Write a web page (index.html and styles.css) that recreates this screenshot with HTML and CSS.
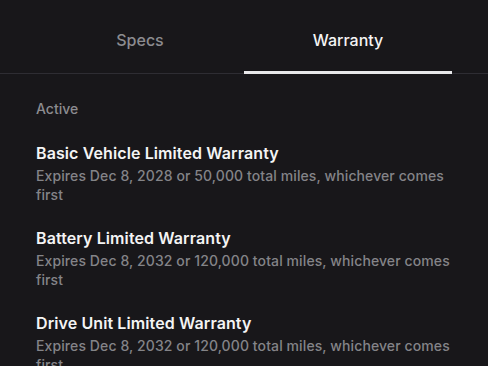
FILE: index.html
```html
<!DOCTYPE html>
<html>
<head>
  <title>Warranty</title>
  <meta name="viewport" content="width=device-width, initial-scale=1">
  <link rel="stylesheet" href="styles.css">
</head>
<body>
  <div class="tabs">
    <div class="tab">Specs</div>
    <div class="tab active">Warranty</div>
  </div>
  <div class="content">
    <div class="section-label">Active</div>
    <div class="item">
      <div class="item-title">Basic Vehicle Limited Warranty</div>
      <div class="item-sub">Expires Dec 8, 2028 or 50,000 total miles, whichever comes first</div>
    </div>
    <div class="item">
      <div class="item-title">Battery Limited Warranty</div>
      <div class="item-sub">Expires Dec 8, 2032 or 120,000 total miles, whichever comes first</div>
    </div>
    <div class="item">
      <div class="item-title">Drive Unit Limited Warranty</div>
      <div class="item-sub">Expires Dec 8, 2032 or 120,000 total miles, whichever comes first</div>
    </div>
  </div>
</body>
</html>
```

FILE: styles.css
```css
body {
  font-family: Inter, "Noto Sans", sans-serif;
  background: #18171a;
  margin: 0;
  padding: 0;
  color: #f2f2f2;
}
.tabs {
  display: flex;
  padding: 0 36px;
  border-bottom: 1px solid #2e2d33;
}
.tab {
  flex: 1;
  text-align: center;
  font-size: 16px;
  font-weight: 500;
  color: #8c8c90;
  line-height: 81px;
  border-bottom: 3px solid transparent;
  margin-bottom: -1px;
  box-sizing: border-box;
  height: 74px;
}
.tab.active {
  color: #f4f4f4;
  border-bottom-color: #e8e8ea;
}
.content {
  padding: 26px 36px 0;
}
.section-label {
  font-size: 14px;
  font-weight: 500;
  color: #8c8c90;
  margin-bottom: 25px;
}
.item {
  margin-bottom: 23px;
}
.item-title {
  font-size: 16px;
  font-weight: 600;
  letter-spacing: 0.1px;
  color: #f4f4f4;
  line-height: 22px;
}
.item-sub {
  font-size: 14px;
  font-weight: 500;
  letter-spacing: 0.1px;
  color: #848488;
  line-height: 19px;
  margin-top: 2px;
}
```
